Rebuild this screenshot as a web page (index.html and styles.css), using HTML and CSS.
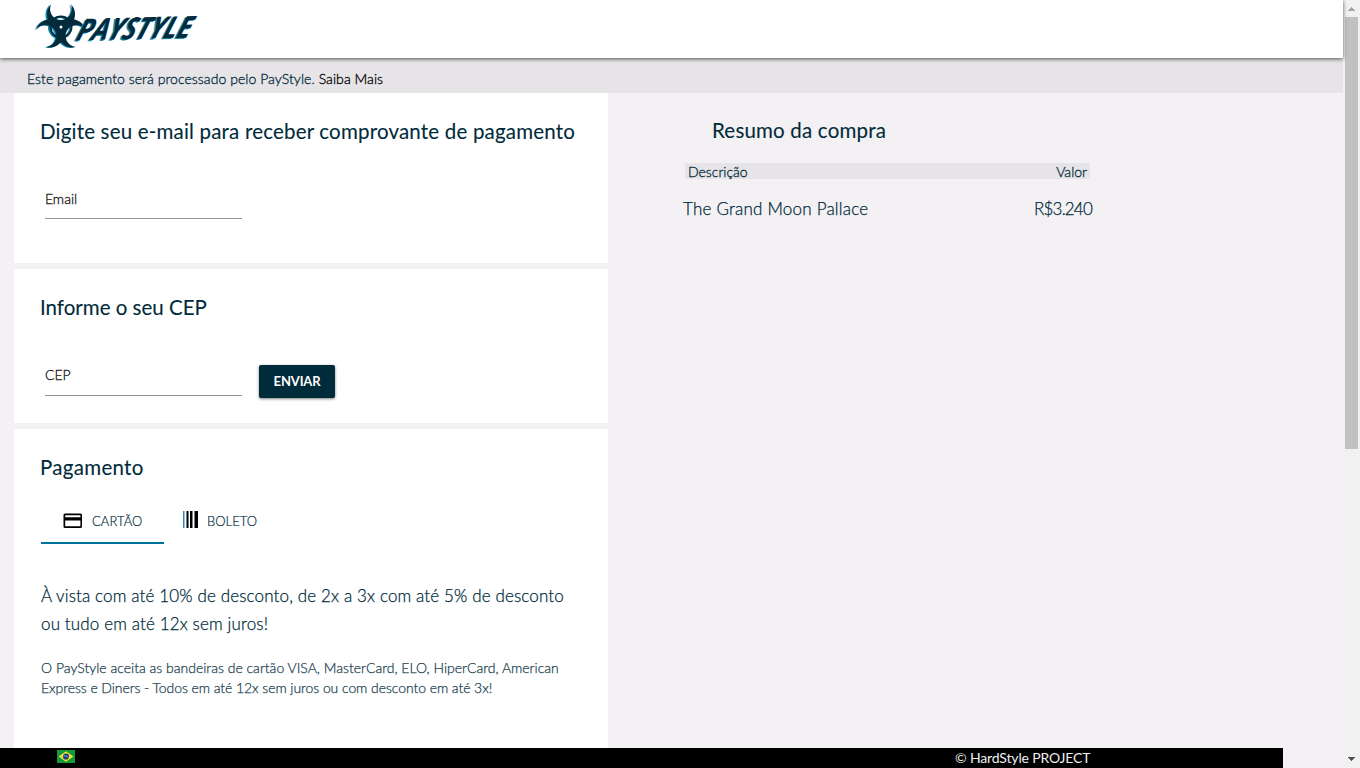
FILE: index.html
```html
<!DOCTYPE html>
<html lang="pt-BR">
<head>
<meta charset="utf-8">
<title>PayStyle</title>
<link rel="stylesheet" href="styles.css">
</head>
<body>
<div class="window">
  <div class="page">
    <header class="topbar">
      <svg class="logo" width="170" height="50" viewBox="0 0 170 50" role="img" aria-label="PayStyle">
        <defs>
          <path id="horn" d="M-10 -22.500A14 14 0 1 0 10 -22.500A11 11 0 1 1 -10 -22.500Z"/>
          <g id="hazard">
            <use href="#horn"/>
            <use href="#horn" transform="rotate(120)"/>
            <use href="#horn" transform="rotate(240)"/>
            <circle class="ring" r="10.500"/>
          </g>
        </defs>
        <g class="logo-glow" transform="translate(25.500 27.500)"><use href="#hazard"/></g>
        <g class="logo-ink" transform="translate(27 27)"><use href="#hazard"/><circle class="logo-core" r="1.500"/></g>
        <g transform="translate(41 40.500) rotate(-1.500) skewX(-20)">
          <text class="wordmark wordmark-glow" x="-1.500" y="1" textLength="114" lengthAdjust="spacingAndGlyphs">PAYSTYLE</text>
          <text class="wordmark" x="0" y="0" textLength="114" lengthAdjust="spacingAndGlyphs" aria-hidden="true">PAYSTYLE</text>
        </g>
      </svg>
    </header>
    <div class="notice"><span>Este pagamento será processado pelo PayStyle.</span> <a class="more">Saiba Mais</a></div>
    <main class="content">
      <div class="steps">
        <section class="card card-email">
          <h2 class="title title-email">Digite seu e-mail para receber comprovante de pagamento</h2>
          <div class="field"><label class="label">Email</label></div>
        </section>
        <section class="card card-cep">
          <h2 class="title title-cep">Informe o seu CEP</h2>
          <div class="row">
            <div class="field field-cep"><label class="label label-cep">CEP</label></div>
            <button class="send">ENVIAR</button>
          </div>
        </section>
        <section class="card card-pay">
          <h2 class="title title-pay">Pagamento</h2>
          <div class="tabs">
            <div class="tab tab-active">
              <svg width="20" height="16" viewBox="0 0 20 16"><path fill="#000" fill-rule="evenodd" d="M2 0.500h15.500a1.500 1.500 0 0 1 1.500 1.500v11.500a1.500 1.500 0 0 1-1.500 1.500H2a1.500 1.500 0 0 1-1.500-1.500V2A1.500 1.500 0 0 1 2 0.500zM2.200 2.200v2h15.200v-2zM2.200 7.500v5.700h15.200V7.500z"/></svg>
              <span class="tab-name tab-card">CARTÃO</span>
            </div>
            <div class="tab">
              <svg class="barcode" width="16" height="17" viewBox="0 0 16 17"><path fill="#2f88ad" d="M0 0h1.500v17H0z"/><path fill="#000" d="M3.500 0h2v17h-2zM7 0h2.500v17H7zM11.500 0H15v17h-3.500z"/></svg>
              <span class="tab-name tab-slip">BOLETO</span>
            </div>
          </div>
          <p class="offer"><span class="offer-a">À vista com até 10% de desconto, de 2x a 3x com até 5% de desconto</span><br><span class="offer-b">ou tudo em até 12x sem juros!</span></p>
          <p class="brands"><span class="brands-a">O PayStyle aceita as bandeiras de cartão VISA, MasterCard, ELO, HiperCard, American</span><br><span class="brands-b">Express e Diners - Todos em até 12x sem juros ou com desconto em até 3x!</span></p>
        </section>
      </div>
      <aside class="summary">
        <h2 class="title title-summary">Resumo da compra</h2>
        <div class="summary-head"><span class="col-desc">Descrição</span><span class="col-value">Valor</span></div>
        <div class="summary-item"><span class="item-name">The Grand Moon Pallace</span><span class="item-price">R$3.240</span></div>
      </aside>
    </main>
    <footer class="footer">
      <svg width="18" height="13" viewBox="0 0 18 13"><path fill="#159a3a" d="M0 0h18v13H0z"/><path fill="#f2e12d" d="M9 1.300 16.300 6.500 9 11.700 1.700 6.500z"/><circle cx="9" cy="6.500" r="3.100" fill="#173f8a"/><path d="M6.200 5.700q3-.4 5.500 2" fill="none" stroke="#b8cbe0" stroke-width=".7"/></svg>
      <span class="copy">© HardStyle PROJECT</span>
    </footer>
  </div>
  <div class="scrollbar">
    <svg width="17" height="17" viewBox="0 0 17 17"><path fill="#a3a3a3" d="M8 7h1v1h1v1h1v1h1v1H5v-1h1V9h1V8h1z"/></svg>
    <div class="thumb"></div>
    <svg class="down" width="17" height="17" viewBox="0 0 17 17"><path fill="#505050" d="M5 6h7v1h-1v1h-1v1H9v1H8V9H7V8H6V7H5z"/></svg>
  </div>
</div>
</body>
</html>
```
FILE: styles.css
```css
* { box-sizing: border-box; }
body { margin: 0; overflow: hidden; background: #f3f1f4; color: #002b3a; font-family: Lato, "Open Sans", sans-serif; }
.window { display: flex; height: 768px; }
.page { flex: 1; min-width: 0; display: flex; flex-direction: column; }
.topbar { height: 58px; flex: none; padding-left: 34px; background: #fff; box-shadow: 0 1px 4px rgba(0,0,0,.65); z-index: 1; }
.logo { display: block; overflow: visible; }
.logo-glow { fill: #1685aa; stroke: #1685aa; }
.logo-ink { fill: #042b3c; stroke: #042b3c; }
.logo use { stroke-width: .1; }
.ring { fill: none; stroke-width: 2; }
.logo-core { fill: #fff; stroke: none; }
.wordmark { font-family: "Open Sans", sans-serif; font-weight: 700; font-style: italic; font-size: 30px; fill: #042b3c; }
.wordmark-glow { fill: #1685aa; }
.notice { height: 35px; flex: none; padding: 12px 0 0 27px; background: #e6e4e7; font-size: 14px; line-height: 18px; white-space: nowrap; font-weight: 300; letter-spacing: .06px; -webkit-text-stroke: .3px; }
.more { color: #000; }
.content { flex: 1; min-height: 0; display: flex; padding-left: 14px; overflow: hidden; }
.steps { width: 594px; flex: none; display: flex; flex-direction: column; gap: 6px; }
.card { flex: none; padding: 25px 27px 0; background: #fff; white-space: nowrap; }
.card-email { height: 170px; }
.card-cep { height: 154px; }
.card-pay { height: 340px; }
.title { margin: 0 0 0 -1px; font-size: 20.5px; line-height: 26px; font-weight: 400; letter-spacing: .19px; -webkit-text-stroke: .1px; }
.title-cep { letter-spacing: 0; }
.title-pay { letter-spacing: .3px; }
.field { width: 197px; height: 34px; margin: 41px 0 0 4px; border-bottom: 1px solid #949494; }
.field-cep { height: 35px; }
.label { display: block; padding-top: 5px; font-size: 14px; line-height: 18px; color: #111; font-weight: 300; -webkit-text-stroke: .3px; }
.row { display: flex; }
.send { width: 76px; height: 33px; margin: 45px 0 0 17px; padding: 0 0 2px; border: 0; border-radius: 2px; background: #002b3a; color: #fff; font: 700 13px/30px Lato, sans-serif; letter-spacing: -.15px; box-shadow: 0 1px 3px rgba(0,0,0,.5); }
.tabs { display: flex; margin-top: 20px; height: 44px; }
.tab { display: flex; align-items: center; padding: 0 0 4px 19px; }
.tab-active { width: 123px; padding: 1px 0 1px 22px; border-bottom: 2px solid #00729c; }
.tab-name { font-size: 13px; margin-left: 9px; color: #002b3a; font-weight: 300; letter-spacing: .05px; -webkit-text-stroke: .2px; }
.barcode { margin-top: -1px; }
.tab-slip { margin: 2px 0 0 8px; }
.offer { margin: 38px 0 0; font-size: 17px; line-height: 28px; font-weight: 300; letter-spacing: .14px; color: #002b3a; -webkit-text-stroke: .25px; }
.brands { margin: 20px 0 0; font-size: 14px; line-height: 20px; font-weight: 300; color: #1b414f; -webkit-text-stroke: .25px; }
.brands-b { letter-spacing: -.07px; }
.summary { width: 410px; margin-left: 75px; padding-top: 24px; white-space: nowrap; }
.title-summary { margin-left: 29px; }
.summary-head { display: flex; justify-content: space-between; width: 405px; height: 16px; margin: 20px 0 0 2px; padding: 0 3px; background: #e6e4e7; font-size: 14px; line-height: 18px; font-weight: 300; -webkit-text-stroke: .3px; }
.summary-item { display: flex; justify-content: space-between; margin-top: 19px; font-size: 17px; line-height: 22px; font-weight: 300; letter-spacing: .22px; -webkit-text-stroke: .25px; }
.item-price { letter-spacing: -.8px; margin-right: 1px; }
.footer { width: 1283px; height: 20px; flex: none; display: flex; align-items: flex-start; padding: 2px 0 0 57px; background: #000; z-index: 1; }
.copy { margin-left: 880px; font-size: 14px; line-height: 16px; letter-spacing: -.15px; color: #eee; white-space: nowrap; }
.scrollbar { width: 17px; display: flex; flex-direction: column; align-items: center; background: #f1f1f1; }
.scrollbar svg { flex: none; display: block; }
.thumb { width: 13px; height: 432px; background: #c1c1c1; }
.down { margin-top: auto; }
```
